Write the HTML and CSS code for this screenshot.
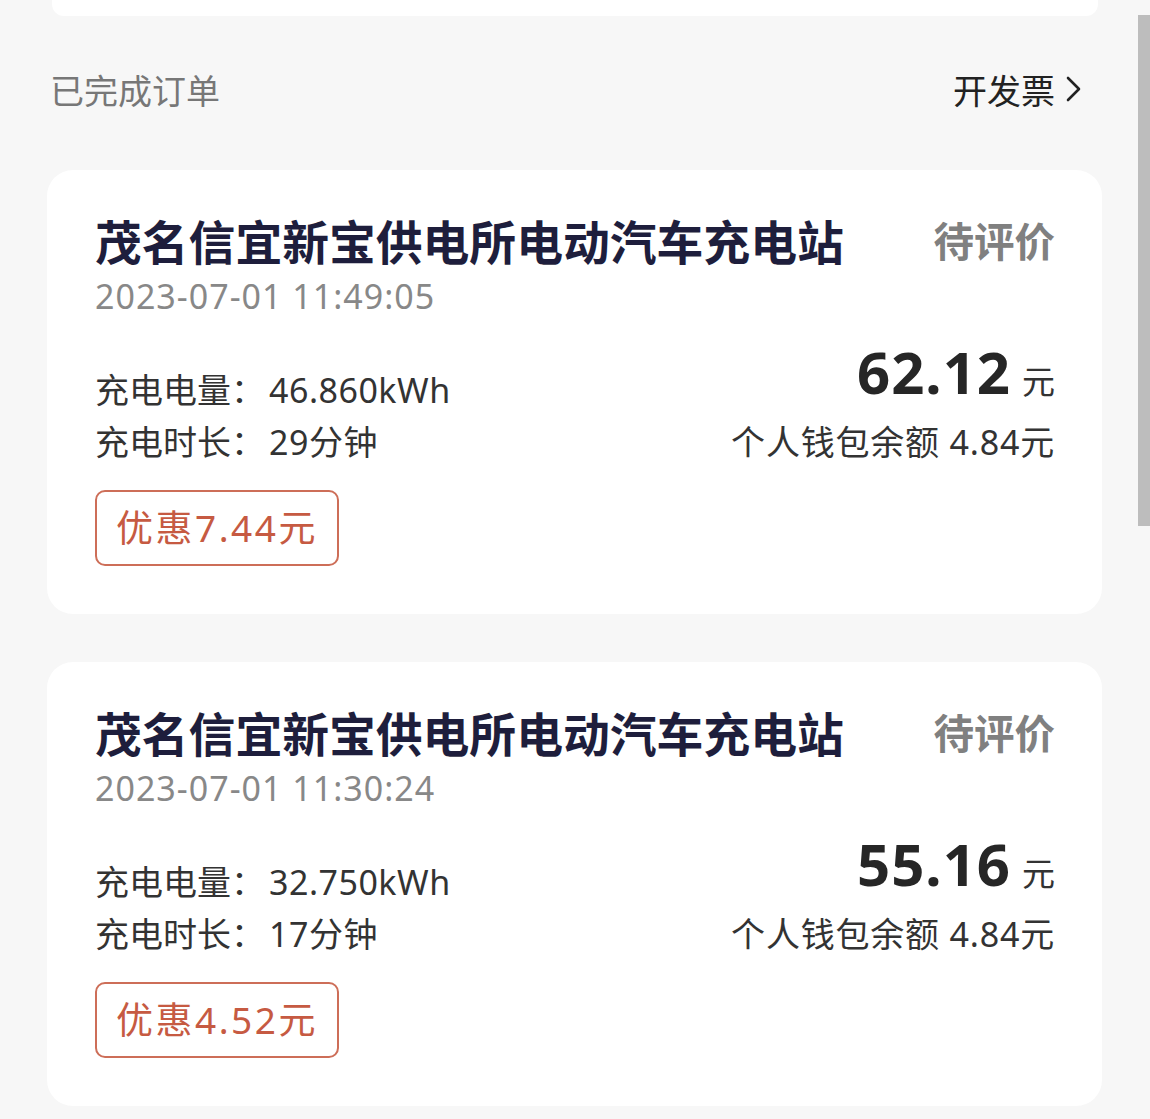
FILE: index.html
```html
<!DOCTYPE html>
<html lang="zh-CN">
<head>
    <meta charset="UTF-8">
    <meta name="viewport" content="width=device-width, initial-scale=1.0">
    <title>已完成订单</title>
    <link rel="stylesheet" href="styles.css">
</head>
<body>
    <div id="page">
        <div class="top-block"></div>

        <div class="list-header">
            <span class="list-title">已完成订单</span>
            <a class="invoice-link" href="#">
                <span>开发票</span>
                <svg class="chevron" width="18" height="28" viewBox="0 0 18 28">
                    <polyline points="3,3 14,14 3,25" fill="none" stroke="#222" stroke-width="2.6" stroke-linecap="round" stroke-linejoin="round"/>
                </svg>
            </a>
        </div>

        <div class="order-card">
            <div class="card-head">
                <div>
                    <div class="station">茂名信宜新宝供电所电动汽车充电站</div>
                    <div class="time">2023-07-01 11:49:05</div>
                </div>
                <div class="status">待评价</div>
            </div>
            <div class="card-body">
                <div class="info">
                    <div class="info-row">充电电量：<span class="num">46.860kWh</span></div>
                    <div class="info-row">充电时长：<span class="num">29分钟</span></div>
                </div>
                <div class="amount">
                    <div class="price"><span class="price-num">62.12</span><span class="price-unit">元</span></div>
                    <div class="wallet">个人钱包余额 4.84元</div>
                </div>
            </div>
            <div class="discount">优惠7.44元</div>
        </div>

        <div class="order-card">
            <div class="card-head">
                <div>
                    <div class="station">茂名信宜新宝供电所电动汽车充电站</div>
                    <div class="time">2023-07-01 11:30:24</div>
                </div>
                <div class="status">待评价</div>
            </div>
            <div class="card-body">
                <div class="info">
                    <div class="info-row">充电电量：<span class="num">32.750kWh</span></div>
                    <div class="info-row">充电时长：<span class="num">17分钟</span></div>
                </div>
                <div class="amount">
                    <div class="price"><span class="price-num">55.16</span><span class="price-unit">元</span></div>
                    <div class="wallet">个人钱包余额 4.84元</div>
                </div>
            </div>
            <div class="discount">优惠4.52元</div>
        </div>
    </div>

    <div class="scrollbar"></div>
</body>
</html>
```

FILE: styles.css
```css
body {
    margin: 0;
    background-color: #f7f7f7;
    font-family: "Noto Sans", "Noto Sans CJK SC", sans-serif;
    color: #333;
    overflow: hidden;
}
#page {
    padding: 0 48px 0 47px;
}
.top-block {
    height: 16px;
    margin: 0 4px 0 5px;
    background: #fff;
    border-radius: 0 0 12px 12px;
}
.list-header {
    display: flex;
    justify-content: space-between;
    align-items: center;
    height: 48px;
    padding: 49px 19px 57px 3px;
}
.list-title {
    font-size: 34px;
    color: #777;
}
.invoice-link {
    display: flex;
    align-items: center;
    gap: 10px;
    font-size: 34px;
    color: #222;
    text-decoration: none;
}
.order-card {
    background: #fff;
    border-radius: 26px;
    padding: 44px 47px 48px 48px;
    margin-bottom: 48px;
}
.card-head {
    display: flex;
    justify-content: space-between;
    align-items: flex-start;
}
.station {
    font-size: 46.8px;
    font-weight: 700;
    line-height: 56px;
    color: #1e1e3c;
}
.time {
    font-size: 34px;
    line-height: 46px;
    margin-top: 3px;
    color: #888;
    letter-spacing: 1px;
}
.status {
    font-size: 40.5px;
    font-weight: 700;
    line-height: 56px;
    color: #808080;
}
.card-body {
    display: flex;
    justify-content: space-between;
    align-items: flex-end;
    margin-top: 23px;
}
.info-row {
    font-size: 34px;
    line-height: 52px;
    color: #333;
}
.num {
    margin-left: 4px;
    letter-spacing: 0.5px;
}
.amount {
    text-align: right;
}
.price {
    line-height: 60px;
    margin-bottom: -2px;
}
.price-num {
    font-size: 58px;
    font-weight: 700;
    letter-spacing: 1px;
    color: #262626;
}
.price-unit {
    font-size: 33px;
    margin-left: 11px;
    color: #333;
}
.wallet {
    font-size: 34px;
    line-height: 52px;
    letter-spacing: 0.8px;
    color: #333;
}
.discount {
    display: inline-block;
    margin-top: 22px;
    padding: 0 19px;
    height: 72px;
    line-height: 72px;
    border: 2px solid #cd6e58;
    border-radius: 10px;
    font-size: 37px;
    letter-spacing: 2.5px;
    color: #c65a42;
}
.scrollbar {
    position: absolute;
    top: 15px;
    right: 0;
    width: 12px;
    height: 511px;
    background: #bdbdbd;
}
```
